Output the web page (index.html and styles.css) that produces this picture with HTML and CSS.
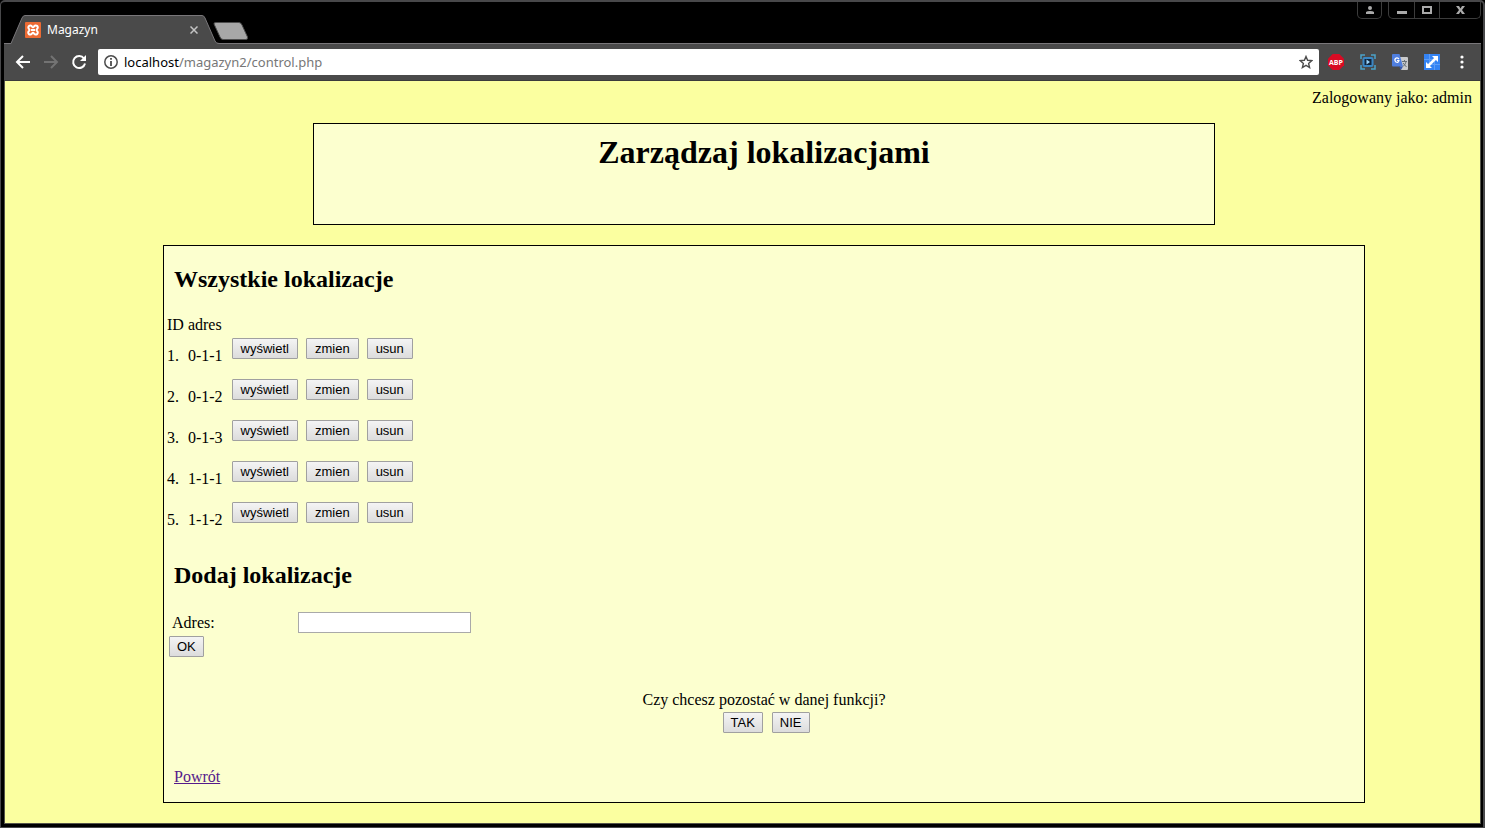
FILE: index.html
```html
<!DOCTYPE html>
<html lang="pl">
<head>
<meta charset="utf-8">
<title>Magazyn</title>
<link rel="stylesheet" href="styles.css">
</head>
<body>
<div class="window">
  <header class="tab-strip">
    <div class="tab">
      <svg class="tab-shape" width="210" height="29" viewBox="0 0 210 29"><path d="M2 29V28.500L13 3Q14 .5 16 .5H193Q195 .5 196 3L206 26Q207 28.500 210 28.500V29Z" fill="#4a4a4a"/><path d="M0 28.500H2L13 3Q14 .5 16 .5H193Q195 .5 196 3L206 26Q207 28.500 210 28.500" fill="none" stroke="#79777a"/></svg>
      <svg class="favicon" width="16" height="16" viewBox="0 0 16 16"><rect width="16" height="16" rx="1" fill="#ec6b34"/><path d="M5.500 3.500A2 2 0 0 0 4 7Q5 8 4 9A2 2 0 1 0 7 11.500Q8 10 9 11.500A2 2 0 1 0 12 9Q11 8 12 7A2 2 0 1 0 9 4.500Q8 6 7 4.500A2 2 0 0 0 5.500 3.500ZM6 8H10" fill="none" stroke="#fff" stroke-width="2"/></svg>
      <span class="tab-title">Magazyn</span>
      <button class="icon-button tab-close" aria-label="Zamknij kartę"><svg width="8" height="8" viewBox="0 0 8 8"><path d="M.5.5l7 7M7.500.5l-7 7" stroke="#c4c4c4" stroke-width="1.500"/></svg></button>
    </div>
    <button class="icon-button new-tab" aria-label="Nowa karta"><svg width="36" height="18" viewBox="0 0 36 18"><path d="M3 .5H26Q28 .5 29 3L34.500 15Q35 17.500 33 17.500H10Q8 17.500 7 15L1 2Q.5.5 3 .5Z" fill="#a7a7a7" stroke="#4d4d4d"/></svg></button>
    <div class="window-controls">
      <button class="icon-button control profile" aria-label="Profil"><svg width="8" height="8" viewBox="0 0 8 8"><circle cx="4" cy="2" r="2" fill="#aaa"/><path d="M0 8V6Q1 5 4 5T8 6V8Z" fill="#aaa"/></svg></button>
      <div class="control-group">
        <button class="icon-button control" aria-label="Minimalizuj"><svg width="10" height="10" viewBox="0 0 10 10"><path d="M0 6H10V9H0Z" fill="#aaa"/></svg></button>
        <button class="icon-button control" aria-label="Maksymalizuj"><svg width="10" height="8" viewBox="0 0 10 8"><path d="M1 1H9V7H1Z" fill="none" stroke="#aaa" stroke-width="2"/></svg></button>
        <button class="icon-button control close" aria-label="Zamknij"><svg width="9" height="8" viewBox="0 0 9 8"><path d="M0 0H3L4.500 2.500 6 0H9L6 4 9 8H6L4.500 5.500 3 8H0L3 4Z" fill="#aaa"/></svg></button>
      </div>
    </div>
  </header>
  <nav class="toolbar">
    <button class="icon-button tool" aria-label="Wstecz"><svg width="16" height="14" viewBox="0 0 16 14"><path d="M8 1L2 7l6 6M2 7H15" fill="none" stroke="#fff" stroke-width="2"/></svg></button>
    <button class="icon-button tool" aria-label="Dalej"><svg width="16" height="14" viewBox="0 0 16 14"><path d="M8 1l6 6-6 6M14 7H1" fill="none" stroke="#737373" stroke-width="2"/></svg></button>
    <button class="icon-button tool" aria-label="Odśwież"><svg width="16" height="16" viewBox="0 0 16 16"><path d="M13 4.500A6 6 0 1 0 14 9.500" fill="none" stroke="#fff" stroke-width="2"/><path d="M15 1V7H9Z" fill="#fff"/></svg></button>
    <div class="address">
      <svg width="14" height="14" viewBox="0 0 14 14"><circle cx="7" cy="7" r="6.200" fill="none" stroke="#4c4c4c" stroke-width="1.500"/><path d="M6.100 6H7.900V11H6.100ZM6.100 3H7.900V4.800H6.100Z" fill="#4c4c4c"/></svg>
      <span class="url"><span class="host">localhost</span>/magazyn2/control.php</span>
      <svg width="14" height="14" viewBox="0 0 14 14"><path d="M7 1.500L8.600 5.300 12.800 5.600 9.600 8.400 10.600 12.500 7 10.300 3.400 12.500 4.400 8.400 1.200 5.600 5.400 5.300Z" fill="none" stroke="#4c4c4c" stroke-width="1.400"/></svg>
    </div>
    <div class="extensions">
      <svg width="16" height="16" viewBox="0 0 16 16"><path d="M4.700 0H11.300L16 4.700V11.300L11.300 16H4.700L0 11.300V4.700Z" fill="#d80b24"/><text class="abp" x="8" y="11" text-anchor="middle">ABP</text></svg>
      <svg width="16" height="16" viewBox="0 0 16 16"><path d="M1 5V1H5M11 1H15V5M15 11V15H11M5 15H1V11" fill="none" stroke="#4ba3c9" stroke-width="1.500"/><rect x="2.500" y="3" width="11" height="10" rx="2" fill="#3b87c4"/><rect x="4.500" y="5" width="7" height="6" fill="#10253d"/><path d="M6.500 5.500L10 8 6.500 10.500Z" fill="#9bd5fb"/></svg>
      <svg width="16" height="16" viewBox="0 0 16 16"><path d="M6 3H15Q16 3 16 4V15Q16 16 15 16H9Z" fill="#c9cacc"/><path d="M1 0H7.500L11 12.500H1Q0 12.500 0 11.500V1Q0 0 1 0Z" fill="#4f7fe0"/><path d="M7 12.500H11L9 16Z" fill="#3458b0"/><path d="M7 5Q5 3 3.500 4.500T4 8Q6.500 9 7 6.500H5" fill="none" stroke="#fff" stroke-width="1.200"/><path d="M10 7.500H15M12.500 6V7.500M11 9L14.500 13M14 8Q13 11 11 12.500" fill="none" stroke="#667078"/></svg>
      <svg width="16" height="16" viewBox="0 0 16 16"><rect width="16" height="16" fill="#3483f3"/><path d="M5.500 0V10M10.500 5V16M0 5.500H10M6 10.500H16" stroke="#5c9df8"/><path d="M4 12L12 4" stroke="#fff" stroke-width="2.500"/><path d="M8 2H14V8ZM2 8V14H8Z" fill="#fff"/></svg>
      <button class="icon-button menu" aria-label="Menu"><svg width="4" height="14" viewBox="0 0 4 14"><g fill="#fff"><circle cx="2" cy="2" r="1.600"/><circle cx="2" cy="7" r="1.600"/><circle cx="2" cy="12" r="1.600"/></g></svg></button>
    </div>
  </nav>
  <div class="page">
    <p class="login">Zalogowany jako: admin</p>
    <main class="content">
      <section class="banner"><h1>Zarządzaj lokalizacjami</h1></section>
      <section class="panel">
        <h2>Wszystkie lokalizacje</h2>
        <table class="locations">
          <tr><th>ID</th><th>adres</th></tr>
          <tr><td>1.</td><td>0-1-1</td><td class="action"><button class="btn">wyświetl</button></td><td class="action"><button class="btn">zmien</button></td><td class="action"><button class="btn">usun</button></td></tr>
          <tr><td>2.</td><td>0-1-2</td><td class="action"><button class="btn">wyświetl</button></td><td class="action"><button class="btn">zmien</button></td><td class="action"><button class="btn">usun</button></td></tr>
          <tr><td>3.</td><td>0-1-3</td><td class="action"><button class="btn">wyświetl</button></td><td class="action"><button class="btn">zmien</button></td><td class="action"><button class="btn">usun</button></td></tr>
          <tr><td>4.</td><td>1-1-1</td><td class="action"><button class="btn">wyświetl</button></td><td class="action"><button class="btn">zmien</button></td><td class="action"><button class="btn">usun</button></td></tr>
          <tr><td>5.</td><td>1-1-2</td><td class="action"><button class="btn">wyświetl</button></td><td class="action"><button class="btn">zmien</button></td><td class="action"><button class="btn">usun</button></td></tr>
        </table>
        <h2>Dodaj lokalizacje</h2>
        <form class="add-form">
          <div class="field"><label for="adres">Adres:</label><input id="adres" type="text"></div>
          <button class="btn" type="button">OK</button>
        </form>
        <div class="question">
          <p>Czy chcesz pozostać w danej funkcji?</p>
          <div class="answers"><button class="btn">TAK</button><button class="btn">NIE</button></div>
        </div>
        <a class="back" href="#">Powrót</a>
      </section>
    </main>
  </div>
</div>
</body>
</html>
```
FILE: styles.css
```css
* { box-sizing: border-box; }
body {
  margin: 0;
  background: #000;
  font-family: "Liberation Serif", "Times New Roman", serif;
  font-size: 16px;
  line-height: 18px;
  color: #000;
}
svg { display: block; flex: none; }
p { margin: 0; }
.window {
  display: flex;
  flex-direction: column;
  min-height: 100vh;
  padding: 0 2px 3px 3px;
  border: 1px solid #48484a;
  border-top-width: 2px;
  border-right-width: 2px;
  border-radius: 5px 5px 0 0;
}
.icon-button {
  display: flex;
  align-items: center;
  justify-content: center;
  padding: 0;
  border: 0;
  background: none;
}

/* Tab strip */
.tab-strip {
  display: flex;
  height: 42px;
  border-bottom: 1px solid #79777a;
}
.tab {
  position: relative;
  display: flex;
  align-items: center;
  width: 210px;
  height: 29px;
  margin: 13px 0 0 5px;
  padding: 0 19px 0 16px;
}
.tab-shape { position: absolute; left: 0; top: 0; }
.favicon { position: relative; }
.tab-title {
  position: relative;
  flex: 1;
  margin-left: 6px;
  font: 12px/16px "Noto Sans", sans-serif;
  color: #fff;
}
.tab-close { position: relative; width: 12px; height: 12px; }
.new-tab { margin-top: 20px; height: 18px; margin-left: -6px; }
.window-controls {
  display: flex;
  gap: 6px;
  height: 17px;
  margin-left: auto;
}
.control { width: 25px; height: 16px; }
.control-group, .profile {
  border: 1px solid #3c3c3c;
  border-top: 0;
  border-radius: 0 0 5px 5px;
}
.profile { height: 17px; }
.control-group { display: flex; }
.control-group .control + .control { border-left: 1px solid #3c3c3c; }
.control-group .close { width: 41px; }

/* Toolbar */
.toolbar {
  display: flex;
  align-items: center;
  height: 37px;
  padding: 0 13px 0 5px;
  background: #4a4a4a;
  border-bottom: 1px solid #3b3b3b;
}
.tool { width: 28px; height: 28px; }
.address {
  display: flex;
  flex: 1;
  align-items: center;
  height: 26px;
  margin-left: 5px;
  padding: 0 6px;
  border-radius: 2px;
  background: #fff;
}
.url {
  flex: 1;
  margin-left: 6px;
  font: 13px/20px "Noto Sans", sans-serif;
  color: #777;
}
.host { color: #000; }
.extensions { display: flex; align-items: center; gap: 16px; margin-left: 9px; }
.abp { font: bold 7px "Open Sans", sans-serif; fill: #fff; }
.menu { width: 12px; height: 16px; }

/* Web page */
.page {
  flex: 1;
  padding: 8px 8px 20px;
  border: 1px solid #55554a;
  border-top: 0;
  background: #fbffa0;
}
.login { text-align: right; }
.content { padding-left: 43px; }
.banner, .panel {
  margin: 0 auto;
  border: 1px solid #000;
  background: #fcffcf;
}
.banner {
  max-width: 902px;
  min-height: 102px;
  margin-top: 16px;
  padding: 10px;
}
h1 {
  margin: 0;
  font-size: 32px;
  line-height: 37px;
  text-align: center;
}
.panel { max-width: 1202px; margin-top: 20px; padding-bottom: 16px; }
h2 {
  margin: 0;
  padding: 20px 10px;
  font-size: 24px;
  line-height: 27px;
}
.locations { border-spacing: 2px; }
.locations th, .locations td { padding: 1px; text-align: left; font-weight: normal; }
.locations td { height: 39px; padding-bottom: 3px; }
.locations td.action { padding-left: 6px; vertical-align: top; }
.locations td.action + .action { padding-left: 5px; }
.btn {
  display: block;
  height: 21px;
  padding: 0 7px;
  border: 1px solid #a0a0a0;
  border-radius: 1px;
  background: linear-gradient(#f4f4f4, #dcdcdc);
  font: 13px/18px "Liberation Sans", Arial, sans-serif;
  color: #000;
}
.action .btn { padding: 0 8px; }
.add-form { padding: 3px 5px 0; }
.field { display: flex; align-items: center; margin-bottom: 3px; padding-left: 3px; }
.field label { width: 126px; }
.field input {
  width: 173px;
  height: 21px;
  padding: 1px 2px;
  border: 1px solid #a9a9a9;
  background: #fff;
}
.question { padding-top: 34px; text-align: center; }
.answers {
  display: flex;
  justify-content: center;
  gap: 9px;
  margin-top: 3px;
  padding-left: 4px;
}
.back { display: table; margin: 35px 10px 0; color: #551a8b; }
```
